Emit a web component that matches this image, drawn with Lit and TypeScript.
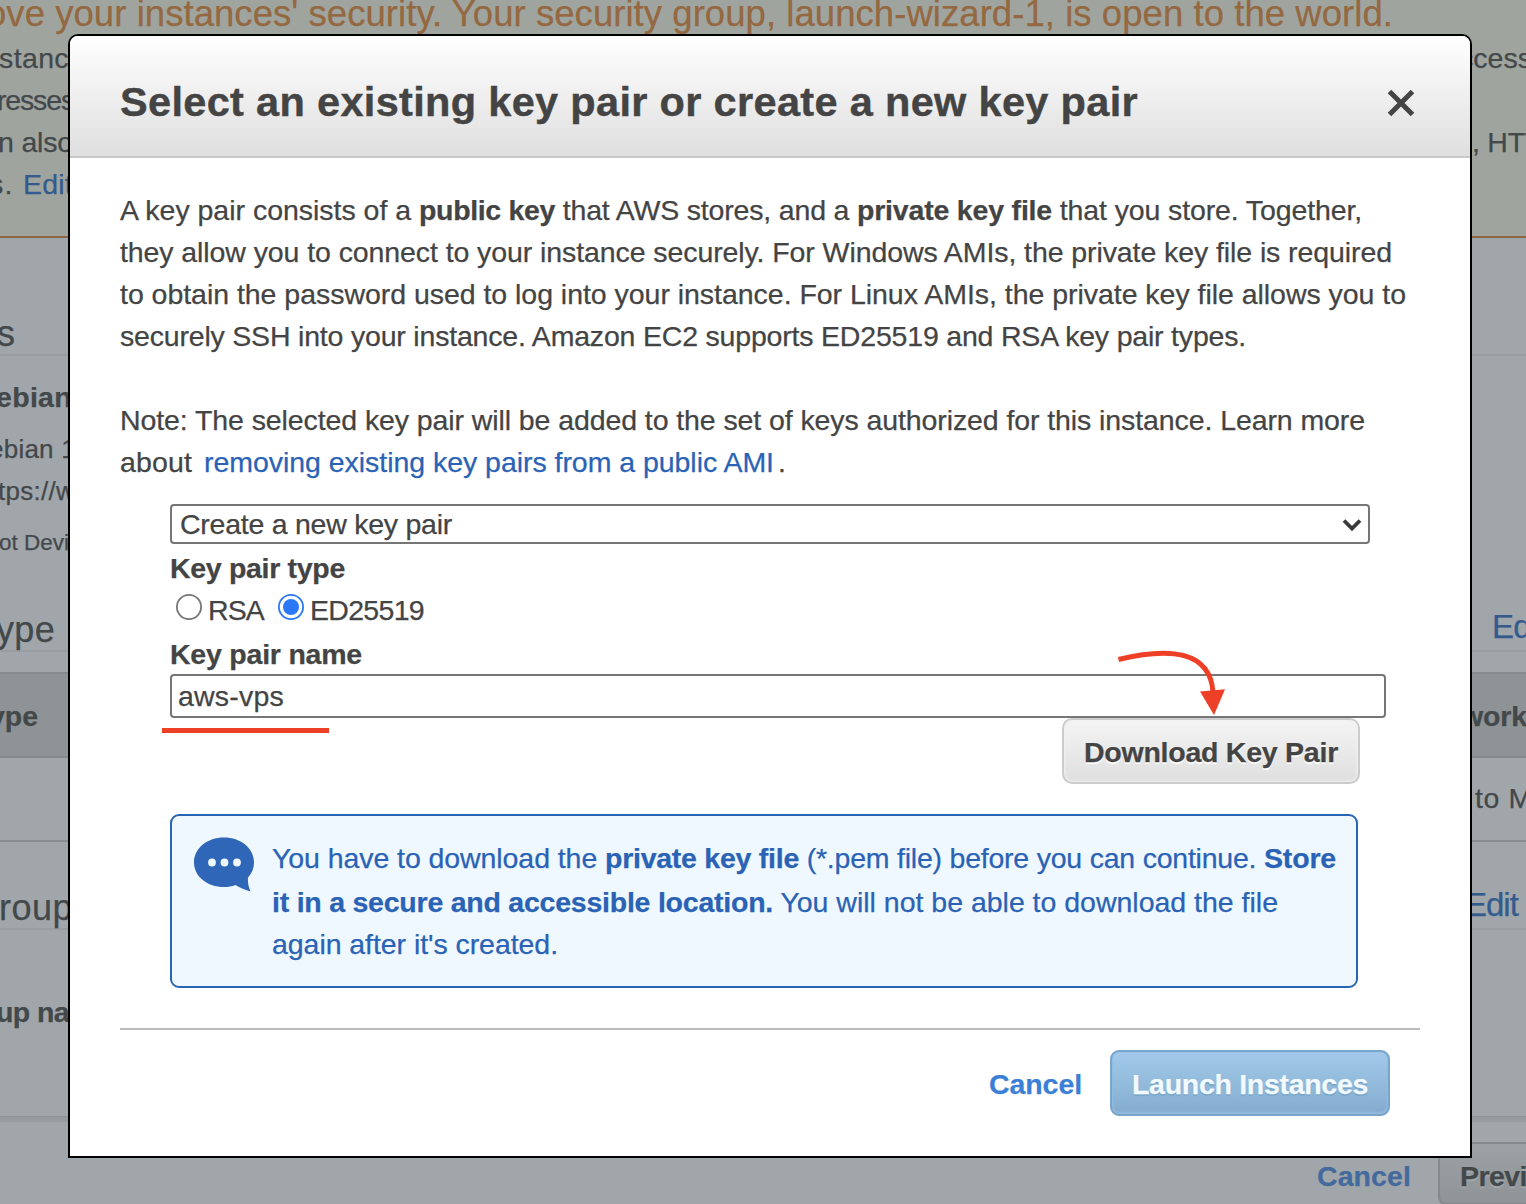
import { LitElement, html, css, svg } from "lit";
import { customElement, property, state, query } from "lit/decorators.js";
import { styleMap } from "lit/directives/style-map.js";

/** A run of text tracked so that it fills a given width. */
@customElement("fit-text")
class FitText extends LitElement {
  @property({ type: Number }) w = 0;
  @property() text = "";
  @state() private tracking = 0;
  @query("span") private run!: HTMLSpanElement;

  static styles = css`
    :host { display: inline; }
    span { white-space: pre; }
  `;

  firstUpdated() {
    const natural = this.run.getBoundingClientRect().width;
    if (this.w > 0) this.tracking = (this.w - natural) / this.text.length;
  }

  render() {
    return html`<span style=${styleMap({ letterSpacing: `${this.tracking}px` })}>${this.text}</span>`;
  }
}

type Run = [text: string, width: number, kind?: "b" | "a"];

const fit = ([text, w, kind]: Run) =>
  html`<fit-text class=${kind ?? "n"} .text=${text} .w=${w}></fit-text>`;
const line = (runs: Run[]) => html`<div class="line">${runs.map(fit)}</div>`;

const intro: Run[][] = [
  [
    ["A key pair consists of a ", 299],
    ["public key", 136, "b"],
    [" that AWS stores, and a ", 302],
    ["private key file", 195, "b"],
    [" that you store. Together,", 310],
  ],
  [["they allow you to connect to your instance securely. For Windows AMIs, the private key file is required", 1272]],
  [["to obtain the password used to log into your instance. For Linux AMIs, the private key file allows you to", 1286]],
  [["securely SSH into your instance. Amazon EC2 supports ED25519 and RSA key pair types.", 1126]],
  [[" ", 0]],
  [["Note: The selected key pair will be added to the set of keys authorized for this instance. Learn more", 1245]],
  [["about ", 80], ["removing existing key pairs from a public AMI", 570, "a"], [".", 8]],
];

const notice: Run[][] = [
  [
    ["You have to download the ", 333],
    ["private key file", 194, "b"],
    [" (*.pem file) before you can continue. ", 465],
    ["Store", 72, "b"],
  ],
  [["it in a secure and accessible location.", 501, "b"], [" You will not be able to download the file", 505]],
  [["again after it's created.", 286]],
];

@customElement("app-root")
class AppRoot extends LitElement {
  static styles = css`
    :host {
      display: block;
      position: relative;
      width: 1526px;
      height: 1204px;
      overflow: hidden;
      font: 28.5px/42px "Liberation Sans", Arial, sans-serif;
      color: #444;
      -webkit-text-stroke: 0.25px currentColor;
    }
    * { box-sizing: border-box; }
    svg { -webkit-text-stroke: 0; }
    .b { font-weight: bold; }
    .line { height: 42px; white-space: nowrap; }

    /* page behind the dialog */
    .page { height: 1204px; background: #a1a6aa; color: #43484b; overflow: hidden; }
    .page .a { color: #345b8d; }
    .row { display: flex; height: 42px; white-space: pre; }
    .right { margin-left: auto; }
    .alert { height: 238px; background: #a0a49f; border-bottom: 2px solid #8f6643; }
    .warn { height: 37px; font-size: 36.5px; line-height: 28px; color: #946840; margin-left: -14px; white-space: nowrap; }
    .head { display: flex; height: 42px; line-height: 40px; font-size: 36px; border-bottom: 2px solid #989da1; white-space: pre; }
    .head .a { font-size: 33px; line-height: 34px; }
    .first { margin-top: 76px; }
    .name { margin-top: 20px; font-weight: bold; }
    .mid { font-size: 26px; }
    .gap10 { margin-top: 10px; }
    .small { font-size: 22.5px; margin-top: 10px; }
    .type { margin-top: 46px; }
    .thead { margin-top: 20px; height: 86px; line-height: 84px; background: #8e9396; border: solid #84898c; border-width: 2px 0; font-weight: bold; }
    .trow { height: 84px; line-height: 80px; border-bottom: 2px solid #888d90; }
    .group { margin-top: 46px; }
    .gname { margin-top: 61px; font-weight: bold; }
    .band { margin-top: 83px; height: 6px; background: #969ba0; border-top: 1px solid #8f9498; }
    .foot { display: flex; justify-content: flex-end; padding-top: 20px; font-weight: bold; line-height: 69px; white-space: pre; }
    .foot .a { color: #446a9d; margin-right: 27px; }
    .prev { width: 88px; height: 63px; padding-left: 20px; border: 2px solid #84898c; border-right: 0; border-radius: 8px 0 0 8px; background: linear-gradient(#9ca1a5, #8f9498); line-height: 65px; text-shadow: 0 2px 0 #a3a8ab; }
    .n1 { margin-left: -1px; } .n2 { margin-left: -2px; } .n3 { margin-left: -3px; }
    .n4 { margin-left: -4px; } .n11 { margin-left: -11px; }
    .r1 { margin-right: -1px; } .r4 { margin-right: -5px; } .r5 { margin-right: -6px; }
    .r6 { margin-right: -7px; } .r15 { margin-right: -16px; }

    /* dialog */
    .dialog {
      position: absolute; left: 68px; top: 34px; width: 1404px; height: 1124px;
      border: 2px solid #000; border-radius: 10px 10px 0 0; background: #fff;
    }
    header {
      display: flex; justify-content: space-between; height: 122px; padding: 0 55px 0 50px;
      border-bottom: 2px solid #c8c8c8; border-radius: 8px 8px 0 0;
      background: linear-gradient(#fff, #dfdfdf);
      font-size: 41.5px; font-weight: bold; line-height: 131px; white-space: nowrap;
      -webkit-text-stroke: 0.4px currentColor;
    }
    header svg { margin-top: 53px; }
    .body { padding: 31px 50px 0; }
    .dialog .a { color: #2a63b5; margin: 0 4px 0 4px; }
    form { margin: 0; padding: 0 50px; }
    .select {
      display: flex; align-items: center; justify-content: space-between; width: 1200px; height: 40px;
      margin-top: 21px; padding: 0 6px 0 8px; border: 2px solid #767676; border-radius: 4px; line-height: 44px;
    }
    .select svg { margin-top: 1px; }
    .label { height: 42px; margin-top: 3px; font-weight: bold; }
    .radios { display: flex; height: 42px; padding-left: 6px; }
    .radios svg { margin: 5px 6px 0 0; }
    .radios .gap { width: 14px; }
    .name-label { height: 41px; margin-top: 2px; font-weight: bold; }
    .input {
      width: 1216px; height: 44px; padding-left: 6px; line-height: 40px;
      border: 2px solid #767676; border-radius: 4px;
    }
    .download {
      width: 298px; height: 66px; margin-left: 892px; text-align: center; line-height: 64px; font-weight: bold;
      border: 2px solid #ccc; border-radius: 10px; background: linear-gradient(#f4f4f4, #dfdfdf);
      box-shadow: inset 0 0 3px 1px #f1f1f1; text-shadow: 0 2px 0 #fff;
    }
    .info {
      display: flex; width: 1188px; height: 174px; margin-top: 30px; padding: 21px 0 0 21px;
      border: 2px solid #2765b4; border-radius: 9px; background: #f0f8ff; color: #2a63b5;
    }
    .info svg { flex: none; margin: 0 17px 0 0; }
    .info .line { height: 43px; }
    .info .line:nth-child(2) { padding-top: 1px; }
    .actions {
      display: flex; justify-content: flex-end; height: 88px; margin-top: 40px; padding: 20px 30px 0 0;
      border-top: 2px solid #bbb; font-weight: bold; line-height: 68px;
    }
    .cancel { color: #3c7fd6; margin-right: 28px; }
    .launch {
      width: 280px; height: 66px; text-align: center; line-height: 64px; color: #f2f9ff;
      border: 2px solid #79a5cd; border-radius: 9px; background: linear-gradient(#a2c9eb, #94bddd 45%, #82abcf);
      box-shadow: inset 0 -1px 2px 1px #93bbdd; text-shadow: 0 2px 1px #7ba6c8;
    }
    .marks { position: absolute; left: 0; top: 0; pointer-events: none; }
  `;

  private page() {
    return html`<div class="page">
      <div class="alert">
        <div class="warn">${fit(["ove your instances' security. Your security group, launch-wizard-1, is open to the world.", 1407])}</div>
        <div class="row"><span class="n1">${fit(["stanc", 70])}</span><span class="right r5">${fit(["ccess", 73])}</span></div>
        <div class="row"><span class="n3">${fit(["resses", 77])}</span></div>
        <div class="row"><span class="n2">${fit(["n also", 75])}</span><span class="right r15">${fit([", HTT", 70])}</span></div>
        <div class="row"><span class="n11">${fit(["s. ", 34])}</span><span class="a">${fit(["Edit", 50])}</span></div>
      </div>
      <div class="head first"><span class="n3">s</span></div>
      <div class="row name"><span class="n4">${fit(["ebian", 76])}</span></div>
      <div class="row mid gap10"><span class="n11">${fit(["ebian 1", 87])}</span></div>
      <div class="row mid"><span class="n2">${fit(["tps://w", 77])}</span></div>
      <div class="row small"><span class="n1">${fit(["ot Devi", 70])}</span></div>
      <div class="head type"><span class="n4">${fit(["ype", 59])}</span><span class="a right r4">${fit(["Ed", 39])}</span></div>
      <div class="row thead"><span class="n11">${fit(["ype", 49])}</span><span class="right r1">${fit(["work", 66])}</span></div>
      <div class="row trow"><span class="right r6">${fit(["to M", 58])}</span></div>
      <div class="head group"><span class="n1">${fit(["roup", 74])}</span><span class="a right">${fit(["Edit ", 61])}</span></div>
      <div class="row gname"><span class="n4">${fit(["up na", 73])}</span></div>
      <div class="band"></div>
      <div class="foot"><span class="a">${fit(["Cancel", 94])}</span><div class="prev">${fit(["Previ", 67])}</div></div>
    </div>`;
  }

  private radio(on: boolean) {
    return html`<svg width="26" height="26" viewBox="0 0 26 26">
      <circle cx="13" cy="13" r="12.1" fill="#fff" stroke=${on ? "#2b78f6" : "#767676"} stroke-width="1.8" />
      ${on ? svg`<circle cx="13" cy="13" r="8" fill="#2b78f6" />` : ""}
    </svg>`;
  }

  render() {
    return html`
      ${this.page()}
      <div class="dialog" role="dialog">
        <header>
          ${fit(["Select an existing key pair or create a new key pair", 1018])}
          <svg width="28" height="28" viewBox="0 0 28 28">
            <path d="M2.5 2.5 25.5 25.5M25.5 2.5 2.5 25.5" stroke="#444" stroke-width="5" />
          </svg>
        </header>
        <div class="body">
          ${intro.map(line)}
          <form>
            <div class="select">
              ${fit(["Create a new key pair", 272])}
              <svg width="20" height="14" viewBox="0 0 20 14">
                <path d="M2 2.5 10 10.5 18 2.5" fill="none" stroke="#3a3a3a" stroke-width="3.8" />
              </svg>
            </div>
            <div class="label">${fit(["Key pair type", 175])}</div>
            <div class="radios">
              ${this.radio(false)}${fit(["RSA", 56])}<span class="gap"></span>
              ${this.radio(true)}${fit(["ED25519", 114])}
            </div>
            <div class="name-label">${fit(["Key pair name", 192])}</div>
            <div class="input">${fit(["aws-vps", 106])}</div>
            <div class="download">${fit(["Download Key Pair", 254])}</div>
            <div class="info">
              <svg width="62" height="56" viewBox="0 0 62 56">
                <path d="M31 0.5C47.5 0.5 61 11 61 25.5C61 31 59 36 55 40.5C54.5 45 55.5 50 57.5 54.5C51.5 52.5 46 50.5 42.5 48C39 49.5 35 50 31 50C14.5 50 1 39.5 1 25.5C1 11 14.5 0.5 31 0.5Z" fill="#2f66b8" />
                <g fill="#f0f8ff"><circle cx="19" cy="25.5" r="3.9" /><circle cx="31.5" cy="25.5" r="3.9" /><circle cx="44" cy="25.5" r="3.9" /></g>
              </svg>
              <div>${notice.map(line)}</div>
            </div>
          </form>
          <div class="actions">
            <span class="cancel">${fit(["Cancel", 93])}</span>
            <div class="launch">${fit(["Launch Instances", 236])}</div>
          </div>
        </div>
      </div>
      <svg class="marks" width="1526" height="1204" viewBox="0 0 1526 1204">
        <rect x="162" y="728" width="167" height="5" fill="#ee4026" />
        <path d="M1118.5 659.5C1170 647 1210 651 1213 692" fill="none" stroke="#ee4026" stroke-width="5" />
        <path d="M1200 691.5 1225 689.3 1214 715Z" fill="#ee4026" />
      </svg>
    `;
  }
}
